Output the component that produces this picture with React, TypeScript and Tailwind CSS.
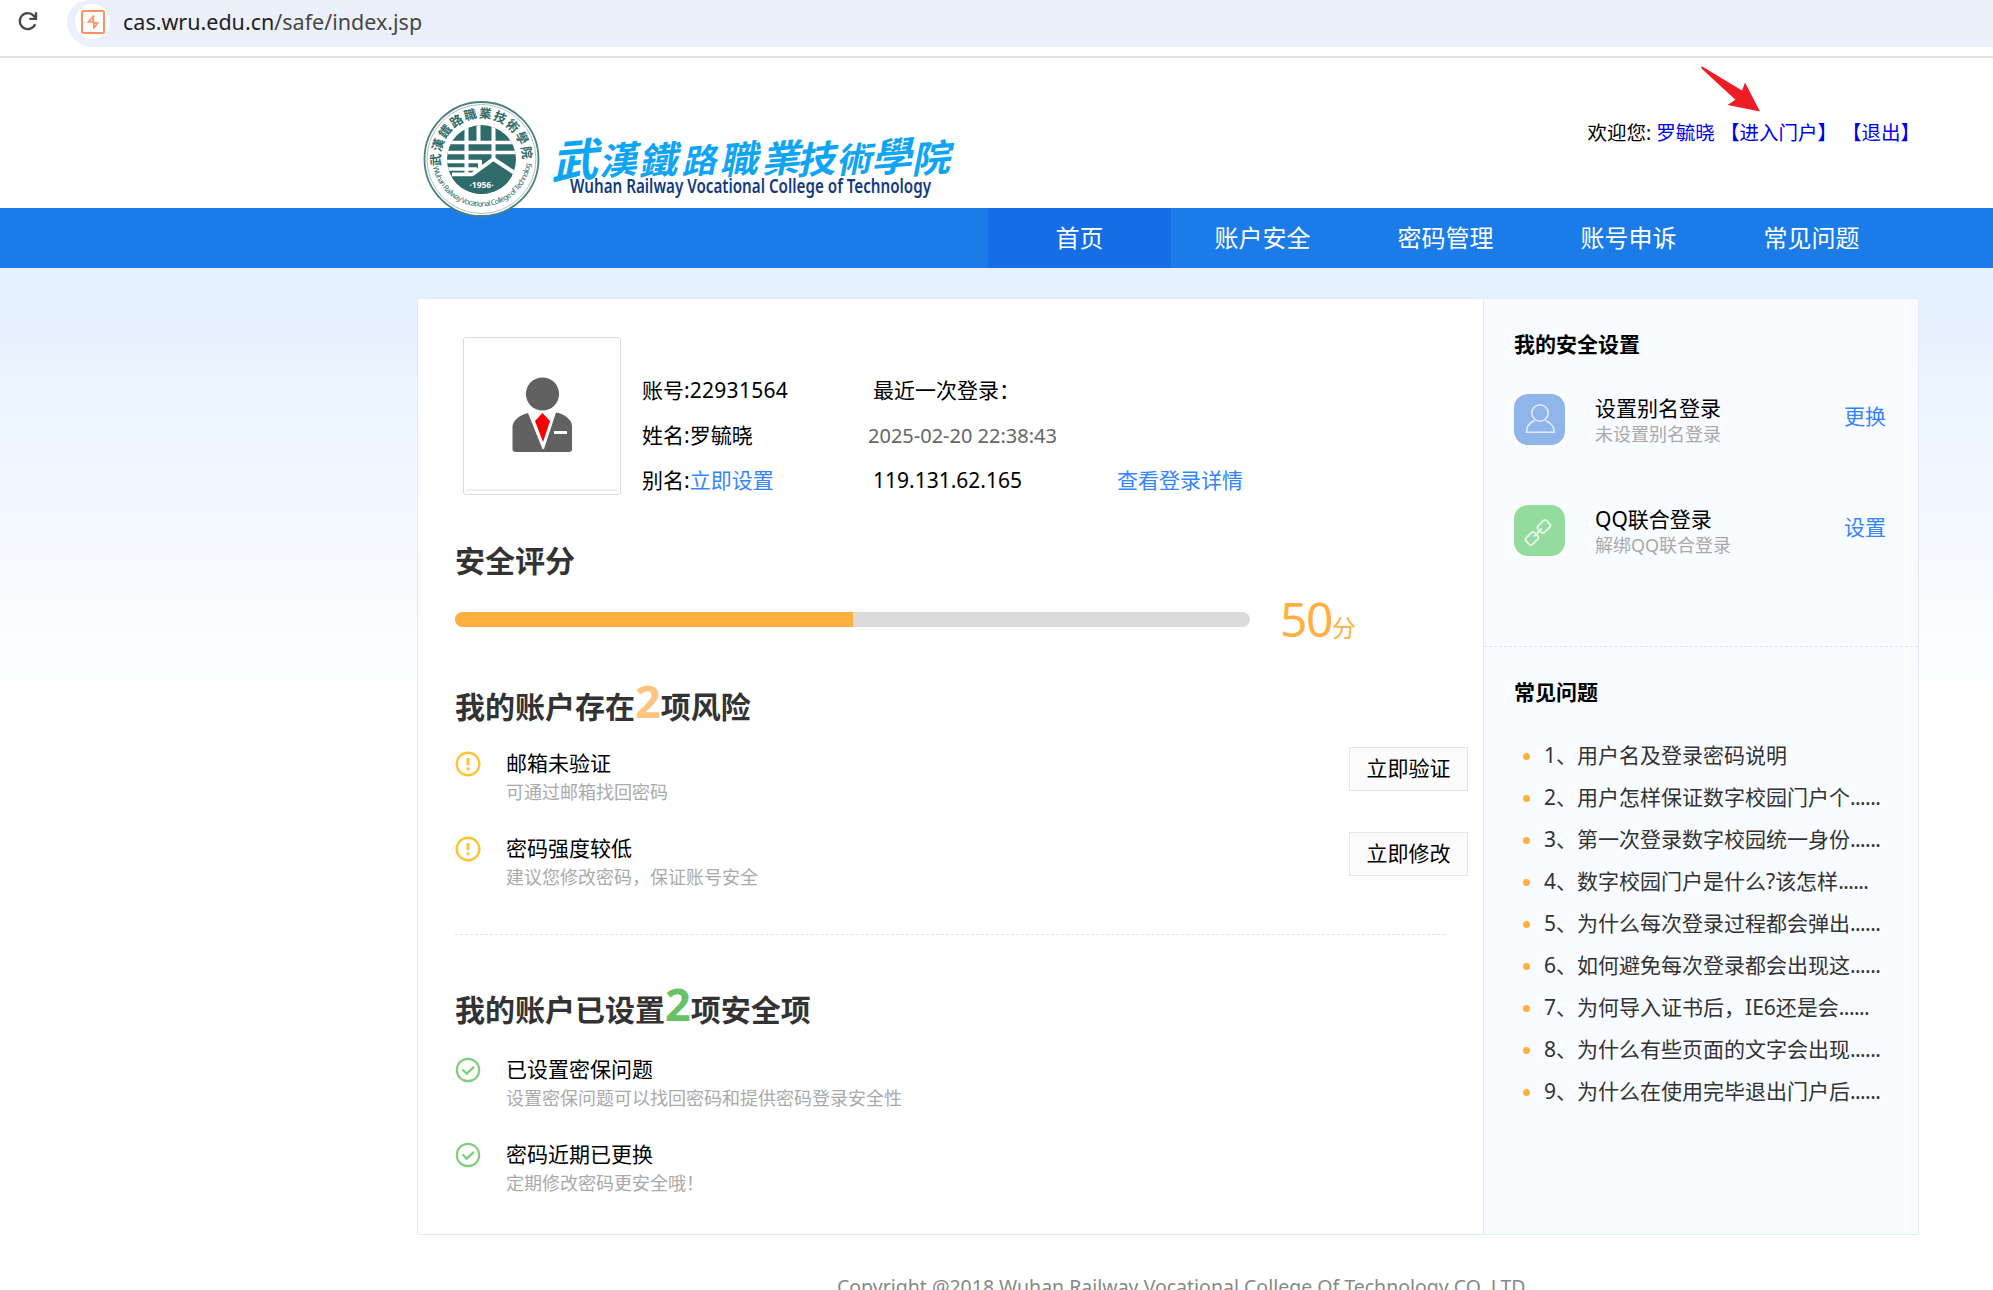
import type { ReactNode } from "react";

const NAV = ["首页", "账户安全", "密码管理", "账号申诉", "常见问题"];

const FAQ = [
  "1、用户名及登录密码说明",
  "2、用户怎样保证数字校园门户个......",
  "3、第一次登录数字校园统一身份......",
  "4、数字校园门户是什么?该怎样......",
  "5、为什么每次登录过程都会弹出......",
  "6、如何避免每次登录都会出现这......",
  "7、为何导入证书后，IE6还是会......",
  "8、为什么有些页面的文字会出现......",
  "9、为什么在使用完毕退出门户后......",
];

const CALLIGRAPHY: { ch: string; x: number; y: number; s: number }[] = [
  { ch: "武", x: 155, y: 82, s: 46 },
  { ch: "漢", x: 198, y: 79, s: 38 },
  { ch: "鐵", x: 238, y: 79, s: 38 },
  { ch: "路", x: 279, y: 78, s: 34 },
  { ch: "職", x: 319, y: 78, s: 38 },
  { ch: "業", x: 361, y: 77, s: 38 },
  { ch: "技", x: 396, y: 78, s: 38 },
  { ch: "術", x: 434, y: 77, s: 35 },
  { ch: "學", x: 472, y: 76, s: 40 },
  { ch: "院", x: 511, y: 77, s: 38 },
];

function ReloadIcon() {
  return (
    <svg className="h-6 w-6" viewBox="0 0 24 24" fill="none" stroke="#474747" strokeWidth="2.3">
      <path d="M19.2 15.2A8 8 0 1 1 17.6 6.6L20 9" />
      <path d="M20 3.2V9.8H13.4" />
    </svg>
  );
}

function SiteIcon() {
  return (
    <svg className="h-6 w-6" viewBox="0 0 24 24" fill="none">
      <rect x="1" y="1" width="22" height="22" rx="1.5" stroke="#ff9166" strokeWidth="2" />
      <path d="M13.2 5.5L7.5 12h5.3v6.5M12.2 5.5v6.2h0M12.6 18.4l4-5.2h-4" stroke="#ff9166" strokeWidth="1.7" />
    </svg>
  );
}

function Logo() {
  return (
    <svg className="h-[124px] w-[536px]" viewBox="0 0 536 124">
      <defs>
        <linearGradient id="ink" x1="0" y1="38" x2="0" y2="92" gradientUnits="userSpaceOnUse">
          <stop offset="0" stopColor="#10a4f5" />
          <stop offset="0.5" stopColor="#0668bd" />
          <stop offset="1" stopColor="#03247c" />
        </linearGradient>
        <clipPath id="disc">
          <circle cx="61.5" cy="64.5" r="34.5" />
        </clipPath>
        <path id="arcTop" d="M21.5 73A41 41 0 1 1 101.500 73" />
        <path id="arcBottom" d="M12.500 69A49.500 49.500 0 0 0 110.500 69" />
      </defs>
      <circle cx="61.500" cy="64" r="57" fill="#fff" stroke="#4e807e" strokeWidth="1.800" />
      <circle cx="61.500" cy="64" r="54.500" fill="none" stroke="#a9c4c3" strokeWidth="1" />
      <g clipPath="url(#disc)">
        <rect x="26" y="29" width="72" height="72" fill="#2f6b68" />
        <g stroke="#fff" fill="none">
          <path d="M46.500 28V48M58.500 28V48M73.500 28V66" strokeWidth="4" />
          <path d="M26 47.500H97M26 57.500H97M26 66.500H61M26 74H57" strokeWidth="3.600" />
          <path d="M46.500 48V80M73.500 64L52 79.500H32M73.500 64L97 79.500M60 65V74" strokeWidth="4" />
        </g>
        <path d="M30 81.500H53L73.500 69L94 82V100H30Z" fill="#2f6b68" />
      </g>
      <text x="61.500" y="93" fontSize="8.500" fontWeight="700" fill="#fff" textAnchor="middle">
        ·1956·
      </text>
      <text fontSize="12.500" fontWeight="700" fill="#2f6b68" textLength="136">
        <textPath href="#arcTop" startOffset="2" textLength="136">
          武漢鐵路職業技術學院
        </textPath>
      </text>
      <text fontSize="7.500" fill="#2f6b68">
        <textPath href="#arcBottom" startOffset="3" textLength="142">
          Wuhan Railway Vocational College of Technology
        </textPath>
      </text>
      {CALLIGRAPHY.map((c) => (
        <text
          key={c.ch}
          transform={`translate(${c.x} ${c.y}) skewX(-16) rotate(-5)`}
          fontSize={c.s}
          fontWeight="700"
          fill="url(#ink)"
          textAnchor="middle"
          className="font-['Noto_Sans_CJK_TC',sans-serif]"
        >
          {c.ch}
        </text>
      ))}
      <text x="150" y="98" fontSize="19" fontWeight="600" fill="#123a80" textLength="361" lengthAdjust="spacingAndGlyphs">
        Wuhan Railway Vocational College of Technology
      </text>
    </svg>
  );
}

function RedArrow() {
  return (
    <svg className="absolute top-[8px] left-[1700px] h-[47px] w-[61px]" viewBox="0 0 61 47">
      <path d="M1 0.700C1.500 0.500 2.500 0.700 3.500 1.200L42 24.500L45 16.500L60 45.500L27.500 39L35.500 33.800L2 3Z" fill="#ee1c24" />
    </svg>
  );
}

function Avatar() {
  return (
    <div className="flex h-[158px] w-[158px] justify-center rounded-[3px] border border-[#dcdcdc] bg-white px-[3px] pb-[3px]">
      <div className="flex w-full justify-center border-b-2 border-[#efeeec] bg-[#fefefe]">
        <svg className="mt-[38px] h-[78px] w-[64px]" viewBox="0 0 64 78">
          <circle cx="32.500" cy="18" r="16.600" fill="#616161" />
          <path d="M18 37C9 39 2.500 45 2.500 51V73Q2.500 76 6 76H59Q62 76 62 73V50C62 43 53 37.500 46 36.500L34 73H32.500Z" fill="#616161" />
          <path d="M32.500 37L40 45L33 66L25 45Z" fill="#f60000" />
          <rect x="44" y="55" width="13" height="3" fill="#fff" />
        </svg>
      </div>
    </div>
  );
}

function WarnIcon() {
  return (
    <svg className="h-[26px] w-[26px]" viewBox="0 0 26 26" fill="none">
      <circle cx="13" cy="13" r="11.300" stroke="#fec434" strokeWidth="2.400" />
      <path d="M13 7v7.200M13 16.500v2.700" stroke="#fec434" strokeWidth="3" />
    </svg>
  );
}

function OkIcon() {
  return (
    <svg className="h-[26px] w-[26px]" viewBox="0 0 26 26" fill="none">
      <circle cx="13" cy="13" r="11.200" stroke="#7fcf7f" strokeWidth="2.200" />
      <path d="M7.500 12.500L11.700 16.700L19 9.800" stroke="#7fcf7f" strokeWidth="2.400" />
    </svg>
  );
}

function UserTile() {
  return (
    <svg className="h-[51px] w-[51px] bg-white" viewBox="0 0 51 51" fill="none">
      <rect width="51" height="51" rx="14" fill="#8fb5ea" />
      <g stroke="#e4eefb" strokeWidth="1.600">
        <circle cx="26" cy="19" r="8.200" />
        <path d="M20.500 26.500C16 28.500 12.500 33 12.500 38.300H40.300C40.300 33 36.500 28.500 31.500 26.500" />
      </g>
    </svg>
  );
}

function LinkTile() {
  return (
    <svg className="h-[51px] w-[51px] bg-white" viewBox="0 0 51 51" fill="none">
      <rect width="51" height="51" rx="14" fill="#93dc9d" />
      <g stroke="#e2f6e5" strokeWidth="2">
        <rect x="-6" y="-4.500" width="12" height="9" rx="2.500" transform="translate(30 21.500) rotate(-45)" />
        <rect x="-6" y="-4.500" width="12" height="9" rx="2.500" transform="translate(18 33.500) rotate(-45)" />
        <path d="M20 31.500L28 23.500" />
      </g>
    </svg>
  );
}

function Item({ icon, title, sub, action }: { icon: ReactNode; title: string; sub: string; action?: string }) {
  return (
    <div className="flex h-[85px] items-start">
      <div className="mt-[4px] w-[51px] shrink-0">{icon}</div>
      <div className="grow">
        <div className="h-8 text-[21px] leading-8 text-black">{title}</div>
        <div className="h-[26px] text-[18px] leading-[26px] text-[#aaa]">{sub}</div>
      </div>
      {action && (
        <button className="mr-[15px] flex h-[44px] w-[119px] items-center justify-center border border-[#e6e6e6] bg-[#fbfbfb] text-[21px] text-black">
          {action}
        </button>
      )}
    </div>
  );
}

function Setting({ icon, title, sub, action }: { icon: ReactNode; title: string; sub: string; action: string }) {
  return (
    <div className="flex h-[111px] items-start">
      {icon}
      <div className="ml-[30px] grow">
        <div className="h-7 text-[21px] leading-7 text-black">{title}</div>
        <div className="h-6 text-[18px] leading-6 text-[#aaa]">{sub}</div>
      </div>
      <a className="mr-[32px] pt-[6px] text-[21px] leading-8 text-[#3385ff]">{action}</a>
    </div>
  );
}

export default function App() {
  return (
    <div className="h-[1290px] w-[1993px] overflow-hidden bg-white font-['Noto_Sans','Noto_Sans_CJK_SC',sans-serif] whitespace-nowrap">
      <div className="flex h-[58px] items-start border-b-2 border-[#e1e1e1] bg-white">
        <div className="mt-[9px] ml-[16px] w-[51px]">
          <ReloadIcon />
        </div>
        <div className="flex h-[47px] grow items-start rounded-bl-[25px] rounded-tl-[22px] bg-[#ecf0fa]">
          <div className="mt-[4px] ml-[8px] flex h-[35px] w-[35px] items-center justify-center rounded-full bg-white">
            <SiteIcon />
          </div>
          <div className="ml-[13px] text-[21.500px] leading-[43px] text-[#474747]">
            <span className="text-[#1f1f1f]">cas.wru.edu.cn</span>/safe/index.jsp
          </div>
        </div>
      </div>

      <header className="relative flex h-[150px] items-start justify-between pr-[73px] pl-[420px]">
        <div className="z-10 mt-[37px] h-[113px] overflow-visible">
          <Logo />
        </div>
        <div className="mt-[60px] text-[19.500px] leading-[30px] text-black">
          欢迎您: <a className="text-[#00e]">罗毓晓</a> <a className="text-[#00e]">【进入门户】</a>{" "}
          <a className="text-[#00e]">【退出】</a>
        </div>
        <RedArrow />
      </header>

      <nav className="flex h-[60px] bg-[#1b7be9] pl-[988px] text-2xl text-white">
        {NAV.map((n, i) => (
          <a key={n} className={`flex w-[183px] items-center justify-center ${i === 0 ? "bg-[#156ee5]" : ""}`}>
            {n}
          </a>
        ))}
      </nav>

      <main className="h-[1022px] bg-[linear-gradient(180deg,#e6f1ff_0px,#e9f3ff_80px,#ffffff_440px)] pt-[30px] pl-[417px]">
        <div className="flex h-[937px] w-[1502px] border border-[#e0ebf7] bg-white">
          <section className="w-[1065px] pl-[37px]">
            <div className="flex h-[234px] pt-[38px] pl-[8px]">
              <Avatar />
              <div className="mt-[31px] ml-[21px] w-[226px] text-[21px] leading-[45px] text-black">
                <div>账号:<span className="tracking-[0.3px]">22931564</span></div>
                <div>姓名:罗毓晓</div>
                <div>
                  别名:<a className="text-[#3385ff]">立即设置</a>
                </div>
              </div>
              <div className="mt-[31px] w-[249px] text-[21px] leading-[45px] text-black">
                <div className="pl-[5px]">最近一次登录：</div>
                <div className="text-[20px] text-[#666]">2025-02-20 22:38:43</div>
                <div className="pl-[5px]">119.131.62.165</div>
              </div>
              <a className="mt-[121px] text-[21px] leading-[45px] text-[#3385ff]">查看登录详情</a>
            </div>

            <h2 className="mt-[6px] h-[44px] text-[30px] leading-[44px] font-bold text-[#333]">安全评分</h2>
            <div className="mt-[4px] flex h-[64px] items-center">
              <div className="h-[15px] w-[795px] overflow-hidden rounded-full bg-[#dbdbdb]">
                <div className="h-full w-[398px] bg-[#ffb03f]" />
              </div>
              <div className="ml-[30px] flex items-baseline text-[#ffb03f]">
                <span className="text-[48px] leading-[64px] tracking-[-1.500px]">50</span>
                <span className="text-2xl">分</span>
              </div>
            </div>

            <h2 className="mt-[18px] h-[64px] text-[30px] leading-[64px] font-bold text-[#333]">
              我的账户存在<span className="text-[45px] text-[#ffc57f]">2</span>项风险
            </h2>
            <div className="mt-[14px] h-[170px]">
              <Item icon={<WarnIcon />} title="邮箱未验证" sub="可通过邮箱找回密码" action="立即验证" />
              <Item icon={<WarnIcon />} title="密码强度较低" sub="建议您修改密码，保证账号安全" action="立即修改" />
            </div>
            <div className="mt-[17px] w-[990px] border-t border-dashed border-[#e3e3e3]" />

            <h2 className="mt-[37px] h-[64px] text-[30px] leading-[64px] font-bold text-[#333]">
              我的账户已设置<span className="text-[45px] text-[#66c266]">2</span>项安全项
            </h2>
            <div className="mt-[17px]">
              <Item icon={<OkIcon />} title="已设置密保问题" sub="设置密保问题可以找回密码和提供密码登录安全性" />
              <Item icon={<OkIcon />} title="密码近期已更换" sub="定期修改密码更安全哦！" />
            </div>
          </section>

          <aside className="w-[435px] border-l border-[#e0ebf7] bg-[#f8fbff]">
            <div className="h-[348px] border-b border-dashed border-[#e0e4e6] pt-[29px] pl-[30px]">
              <h3 className="h-8 text-[21px] leading-8 font-bold text-black">我的安全设置</h3>
              <div className="mt-[34px]">
                <Setting icon={<UserTile />} title="设置别名登录" sub="未设置别名登录" action="更换" />
                <Setting icon={<LinkTile />} title="QQ联合登录" sub="解绑QQ联合登录" action="设置" />
              </div>
            </div>
            <div className="pt-[29px] pl-[30px]">
              <h3 className="h-8 text-[21px] leading-8 font-bold text-black">常见问题</h3>
              <ul className="mt-[27px] ml-[9px]">
                {FAQ.map((q) => (
                  <li key={q} className="flex h-[42px] items-center text-[21px] text-[#333]">
                    <span className="mr-[14px] h-[7px] w-[7px] rounded-full bg-[#ffb03f]" />
                    {q.replace(/\.+$/, "")}
                    {q.endsWith(".") && <span className="tracking-[-0.600px]">......</span>}
                  </li>
                ))}
              </ul>
            </div>
          </aside>
        </div>
        <footer className="mt-[36px] ml-[420px] text-[19.500px] leading-8 text-[#888]">
          Copyright @2018 Wuhan Railway Vocational College Of Technology CO.,LTD
        </footer>
      </main>
    </div>
  );
}
